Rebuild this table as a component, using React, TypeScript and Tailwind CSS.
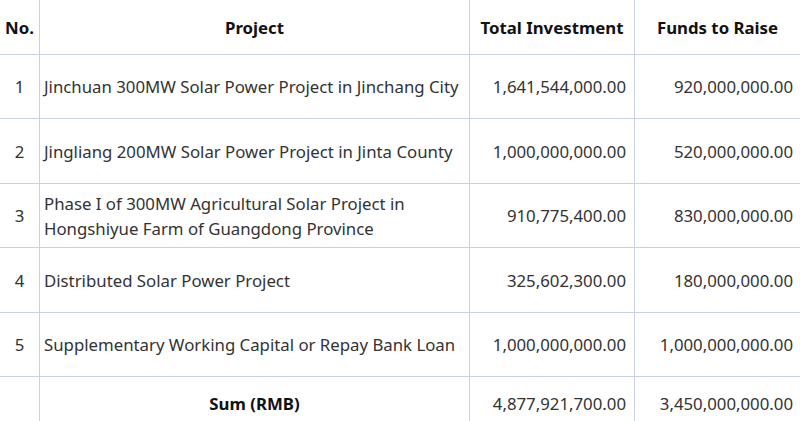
import React from "react";

const rows = [
  { no: "1", project: "Jinchuan 300MW Solar Power Project in Jinchang City", total: "1,641,544,000.00", funds: "920,000,000.00", h: "h-[64px]" },
  { no: "2", project: "Jingliang 200MW Solar Power Project in Jinta County", total: "1,000,000,000.00", funds: "520,000,000.00", h: "h-[65px]" },
  { no: "3", project: "Phase I of 300MW Agricultural Solar Project in Hongshiyue Farm of Guangdong Province", total: "910,775,400.00", funds: "830,000,000.00", h: "h-[64px]" },
  { no: "4", project: "Distributed Solar Power Project", total: "325,602,300.00", funds: "180,000,000.00", h: "h-[65px]" },
  { no: "5", project: "Supplementary Working Capital or Repay Bank Loan", total: "1,000,000,000.00", funds: "1,000,000,000.00", h: "h-[64px]" },
];

const line = "border-[#c9d1e4]";

export default function App() {
  return (
    <div className="w-[800px] h-[421px] overflow-hidden bg-white text-[#333] text-[16.8px] leading-[25px]" style={{ fontFamily: '"Noto Sans", sans-serif' }}>
      <div className="grid grid-cols-[40px_430px_165px_165px]">
        <div className={`h-[55px] flex items-center justify-center border-r border-b ${line} font-bold text-[#111]`}>No.</div>
        <div className={`h-[55px] flex items-center justify-center border-r border-b ${line} font-bold text-[#111]`}>Project</div>
        <div className={`h-[55px] flex items-center justify-center border-r border-b ${line} font-bold text-[#111]`}>Total Investment</div>
        <div className={`h-[55px] flex items-center justify-center border-b ${line} font-bold text-[#111]`}>Funds to Raise</div>

        {rows.map((r) => (
          <React.Fragment key={r.no}>
            <div className={`${r.h} flex items-center justify-center border-r border-b ${line}`}>{r.no}</div>
            <div className={`${r.h} flex items-center px-[4px] border-r border-b ${line}`}>{r.project}</div>
            <div className={`${r.h} flex items-center justify-end px-[8px] border-r border-b ${line}`}>{r.total}</div>
            <div className={`${r.h} flex items-center justify-end px-[7px] border-b ${line}`}>{r.funds}</div>
          </React.Fragment>
        ))}

        <div className={`h-[52px] border-r ${line}`}></div>
        <div className={`h-[52px] flex items-center justify-center border-r ${line} font-bold text-[#111]`}>Sum (RMB)</div>
        <div className={`h-[52px] flex items-center justify-end px-[8px] border-r ${line}`}>4,877,921,700.00</div>
        <div className="h-[52px] flex items-center justify-end px-[7px]">3,450,000,000.00</div>
      </div>
    </div>
  );
}
